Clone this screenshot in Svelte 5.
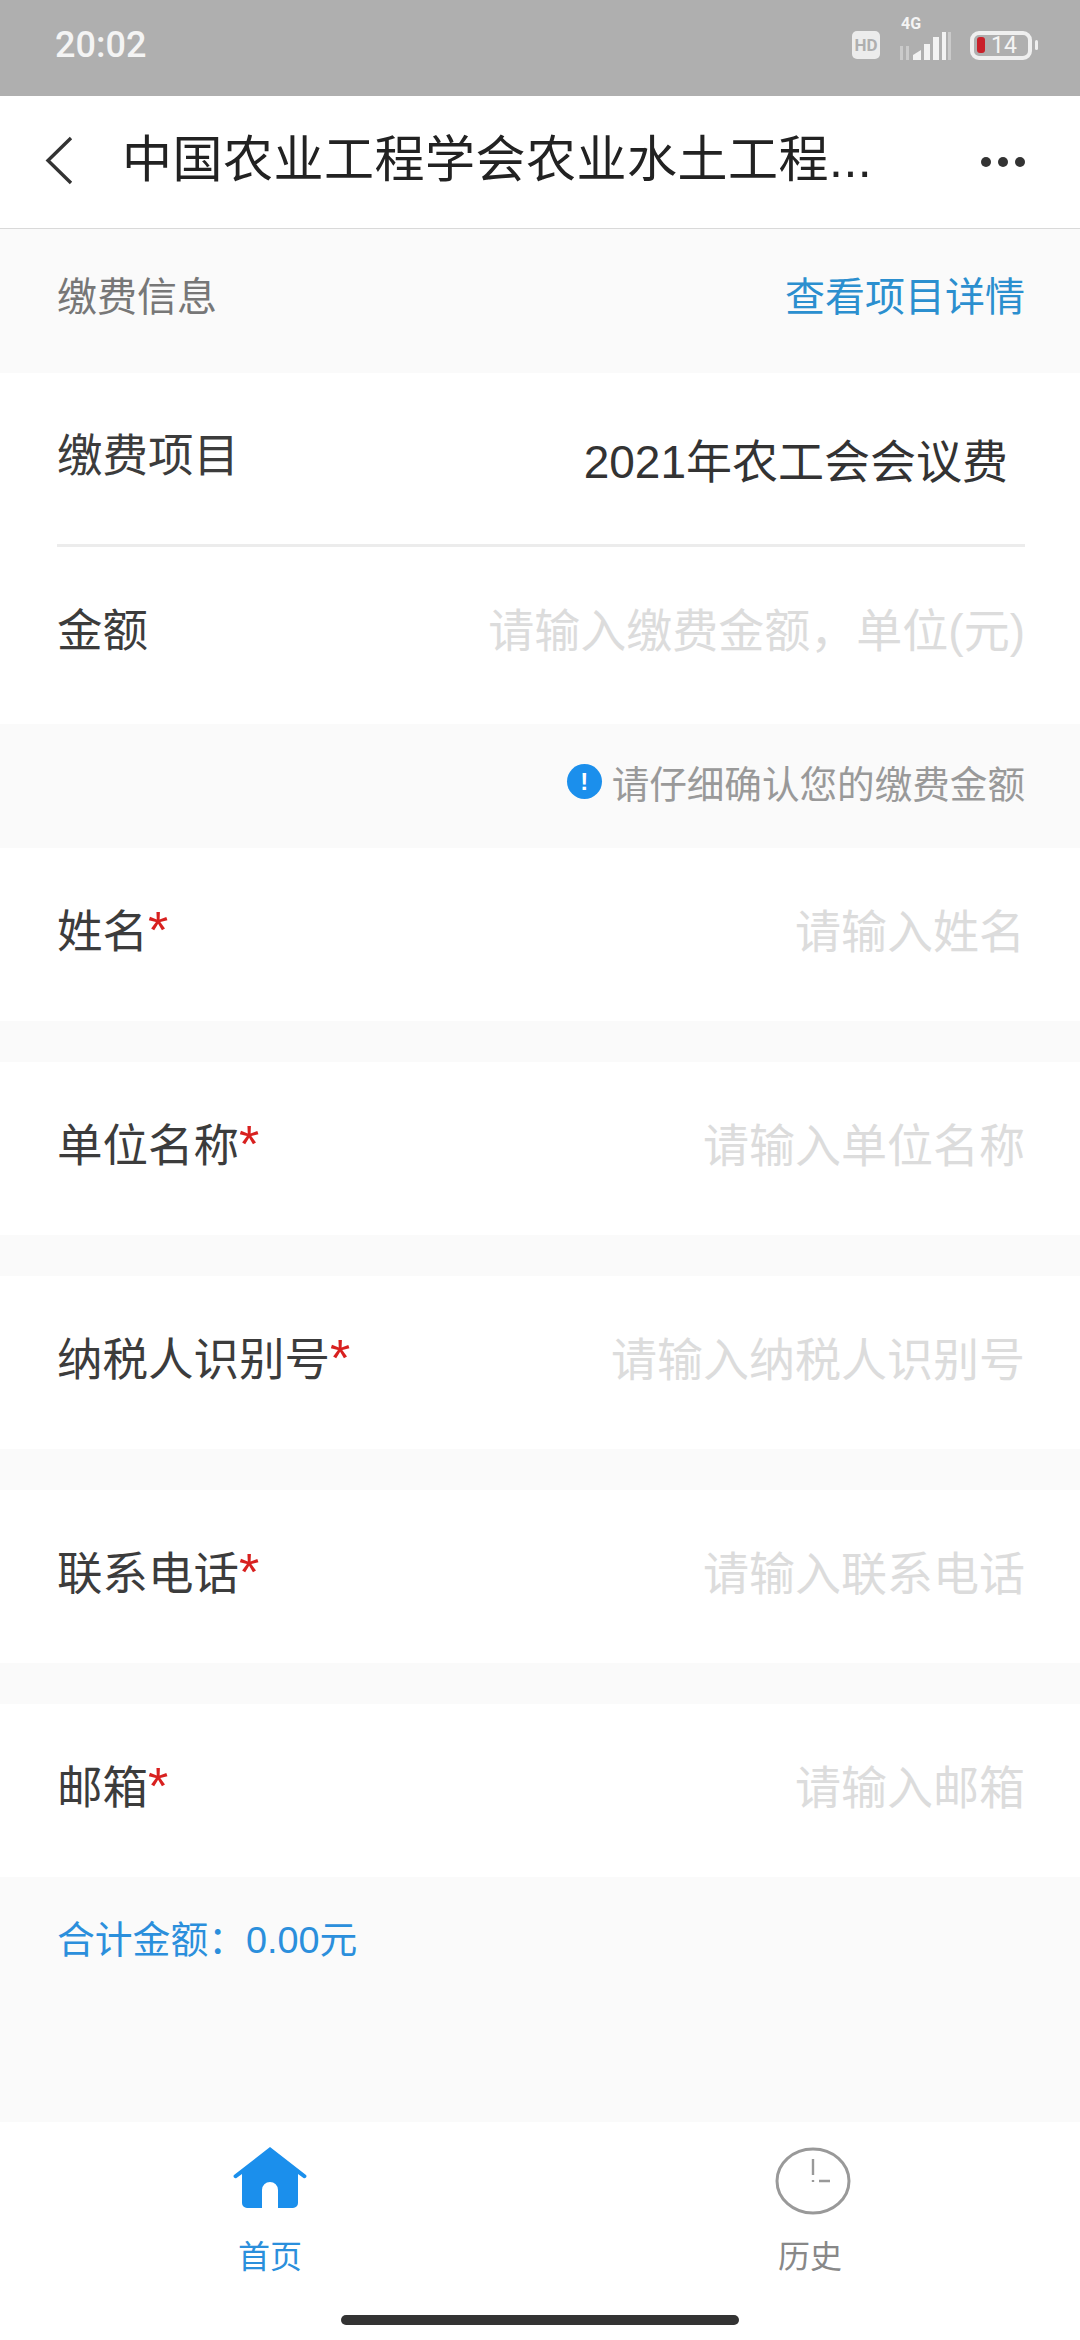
<script>
  const rows = [
    { label: '姓名', ph: '请输入姓名' },
    { label: '单位名称', ph: '请输入单位名称' },
    { label: '纳税人识别号', ph: '请输入纳税人识别号' },
    { label: '联系电话', ph: '请输入联系电话' },
    { label: '邮箱', ph: '请输入邮箱' }
  ];
</script>

<div class="page">
  <div class="status">
    <span class="time">20:02</span>
    <div class="status-icons">
      <span class="hd">HD</span>
      <div class="signal">
        <span class="net">4G</span>
        <svg width="52" height="30" viewBox="0 0 52 30">
          <g fill="#f2f2f2">
            <rect x="0" y="15" width="3" height="14" opacity=".4" />
            <rect x="6" y="15" width="3" height="14" opacity=".4" />
            <path d="M13 29v-5l8-5v10z" />
            <rect x="24" y="13" width="6" height="16" />
            <rect x="33" y="6" width="6" height="23" />
            <rect x="42" y="1" width="4" height="28" />
            <rect x="48" y="1" width="3" height="28" opacity=".4" />
          </g>
        </svg>
      </div>
      <div class="battery">
        <span class="level"></span>
        <span class="pct">14</span>
      </div>
      <span class="tip"></span>
    </div>
  </div>

  <header class="nav">
    <svg class="back" width="29" height="49" viewBox="0 0 29 49">
      <path d="M26 2 L3 24.5 L26 47" fill="none" stroke="#333" stroke-width="3.4" />
    </svg>
    <h1>中国农业工程学会农业水土工程...</h1>
    <div class="dots"><i></i><i></i><i></i></div>
  </header>

  <div class="section-head">
    <span class="muted">缴费信息</span>
    <span class="link">查看项目详情</span>
  </div>

  <div class="card">
    <div class="row project">
      <span class="label">缴费项目</span>
      <span class="value">2021年农工会会议费</span>
    </div>
    <div class="row amount">
      <span class="label">金额</span>
      <span class="ph">请输入缴费金额，单位(元)</span>
    </div>
  </div>

  <div class="notice">
    <span class="info">!</span>
    <span>请仔细确认您的缴费金额</span>
  </div>

  <div class="fields">
    {#each rows as r}
      <div class="row field">
        <span class="label">{r.label}<em>*</em></span>
        <span class="ph">{r.ph}</span>
      </div>
    {/each}
  </div>

  <div class="total">合计金额：0.00元</div>

  <nav class="tabs">
    <div class="tab active">
      <svg width="76" height="62" viewBox="0 0 76 62">
        <path fill="#1b8fec" d="M38 0 L74 28 a2 2 0 0 1 -2.5 3 L66 27 V56 a5 5 0 0 1 -5 5 H46 V43 a8 8 0 0 0 -16 0 V61 H15 a5 5 0 0 1 -5 -5 V27 L4.5 31 a2 2 0 0 1 -2.5 -3 Z" />
      </svg>
      <span>首页</span>
    </div>
    <div class="tab">
      <svg class="clock" width="76" height="68" viewBox="0 0 76 68">
        <ellipse cx="38" cy="34" rx="36" ry="32" fill="none" stroke="#999" stroke-width="3" />
        <path d="M38 12 V28 M38 33 V35 M44 34 H55" stroke="#999" stroke-width="2.4" fill="none" />
      </svg>
      <span>历史</span>
    </div>
    <span class="home-bar"></span>
  </nav>
</div>

<style>
  :global(body) {
    margin: 0;
    background: #fafafa;
  }
  .page {
    width: 1080px;
    height: 2340px;
    display: flex;
    flex-direction: column;
    overflow: hidden;
    background: #fafafa;
    font-family: "Liberation Sans", "Noto Sans CJK SC", sans-serif;
    color: #333;
  }
  .status {
    height: 96px;
    flex: none;
    background: #afafaf;
    display: flex;
    align-items: center;
    justify-content: space-between;
    padding: 0 42px 6px 55px;
    box-sizing: border-box;
    color: #f4f4f4;
  }
  .time {
    font-family: Roboto, sans-serif;
    font-size: 36px;
    font-weight: 500;
    line-height: 40px;
  }
  .status-icons {
    display: flex;
    align-items: center;
  }
  .hd {
    width: 28px;
    height: 28px;
    border-radius: 5px;
    background: #ececec;
    color: #afafaf;
    font: 700 17px/28px Roboto, sans-serif;
    text-align: center;
    margin-right: 20px;
  }
  .signal {
    position: relative;
    width: 52px;
    height: 30px;
    margin-top: 2px;
    margin-right: 18px;
  }
  .signal svg {
    display: block;
  }
  .net {
    position: absolute;
    left: 1px;
    top: -15px;
    font: 700 16px/16px Roboto, sans-serif;
  }
  .battery {
    width: 62px;
    height: 29px;
    box-sizing: border-box;
    border: 4px solid #efefef;
    border-radius: 9px;
    display: flex;
    align-items: center;
    padding-left: 3px;
    gap: 6px;
  }
  .level {
    width: 8px;
    height: 16px;
    border-radius: 3px;
    background: #c9202a;
  }
  .pct {
    font: 400 23px/21px Roboto, sans-serif;
    color: #f4f4f4;
  }
  .tip {
    width: 3px;
    height: 10px;
    margin-left: 3px;
    border-radius: 2px;
    background: #efefef;
  }
  .nav {
    height: 133px;
    flex: none;
    box-sizing: border-box;
    background: #fff;
    border-bottom: 1px solid #d9d9d9;
    display: flex;
    align-items: center;
    padding: 0 55px 4px 45px;
  }
  .back {
    flex: none;
    margin-top: 1px;
  }
  h1 {
    margin: 0 0 0 48px;
    flex: 1;
    font-size: 50px;
    font-weight: 400;
    line-height: 60px;
    letter-spacing: 0.5px;
    color: #222;
    white-space: nowrap;
  }
  .dots {
    display: flex;
    gap: 7px;
    margin-top: 4px;
  }
  .dots i {
    width: 10px;
    height: 10px;
    border-radius: 50%;
    background: #333;
  }
  .section-head {
    height: 144px;
    flex: none;
    box-sizing: border-box;
    display: flex;
    align-items: center;
    justify-content: space-between;
    padding: 0 55px 14px 57px;
    font-size: 40px;
  }
  .muted {
    color: #777;
  }
  .link {
    color: #2b8fcf;
  }
  .card {
    background: #fff;
    flex: none;
  }
  .row {
    display: flex;
    justify-content: space-between;
    align-items: center;
    box-sizing: border-box;
    margin: 0 55px 0 57px;
    font-size: 45.5px;
  }
  .project {
    height: 174px;
    border-bottom: 3px solid #ececec;
    padding-bottom: 14px;
  }
  .value {
    font-size: 46px;
    color: #333;
    margin-right: 17px;
    margin-top: 12px;
  }
  .amount {
    height: 177px;
    padding-bottom: 18px;
  }
  .label {
    color: #3c3c3c;
  }
  .label em {
    font-style: normal;
    font-weight: 400;
    font-size: 52px;
    line-height: 1;
    color: #d8201f;
  }
  .ph {
    color: #dcdcdc;
    font-size: 46px;
  }
  .notice {
    height: 124px;
    flex: none;
    display: flex;
    align-items: center;
    justify-content: flex-end;
    gap: 10px;
    padding: 0 55px 10px 0;
    box-sizing: border-box;
    font-size: 37.6px;
    color: #999;
  }
  .info {
    width: 35px;
    height: 35px;
    border-radius: 50%;
    background: #1b8fec;
    color: #fff;
    font: 700 24px/35px "Liberation Sans", sans-serif;
    text-align: center;
  }
  .fields {
    display: flex;
    flex-direction: column;
    gap: 41px;
    flex: none;
  }
  .field {
    height: 173px;
    margin: 0;
    padding: 0 55px 13px 57px;
    background: #fff;
    box-sizing: border-box;
  }
  .total {
    flex: 1;
    box-sizing: border-box;
    padding: 41px 57px 0;
    font-size: 37.8px;
    line-height: 44px;
    color: #2b8fdc;
  }
  .tabs {
    position: relative;
    height: 218px;
    flex: none;
    background: #fff;
    display: grid;
    grid-template-columns: 1fr 1fr;
    padding: 25px 0 0;
    box-sizing: border-box;
    justify-items: center;
    align-content: start;
  }
  .tab {
    display: flex;
    flex-direction: column;
    align-items: center;
    font-size: 32px;
    color: #888;
    height: 130px;
    justify-content: space-between;
  }
  .tab.active {
    color: #2b8fdc;
  }
  .tab svg {
    display: block;
  }
  .tab .clock {
    margin-left: 6px;
  }
  .tab span {
    line-height: 40px;
  }
  .home-bar {
    position: absolute;
    left: 341px;
    top: 193px;
    width: 398px;
    height: 10px;
    border-radius: 5px;
    background: #333;
  }
</style>
